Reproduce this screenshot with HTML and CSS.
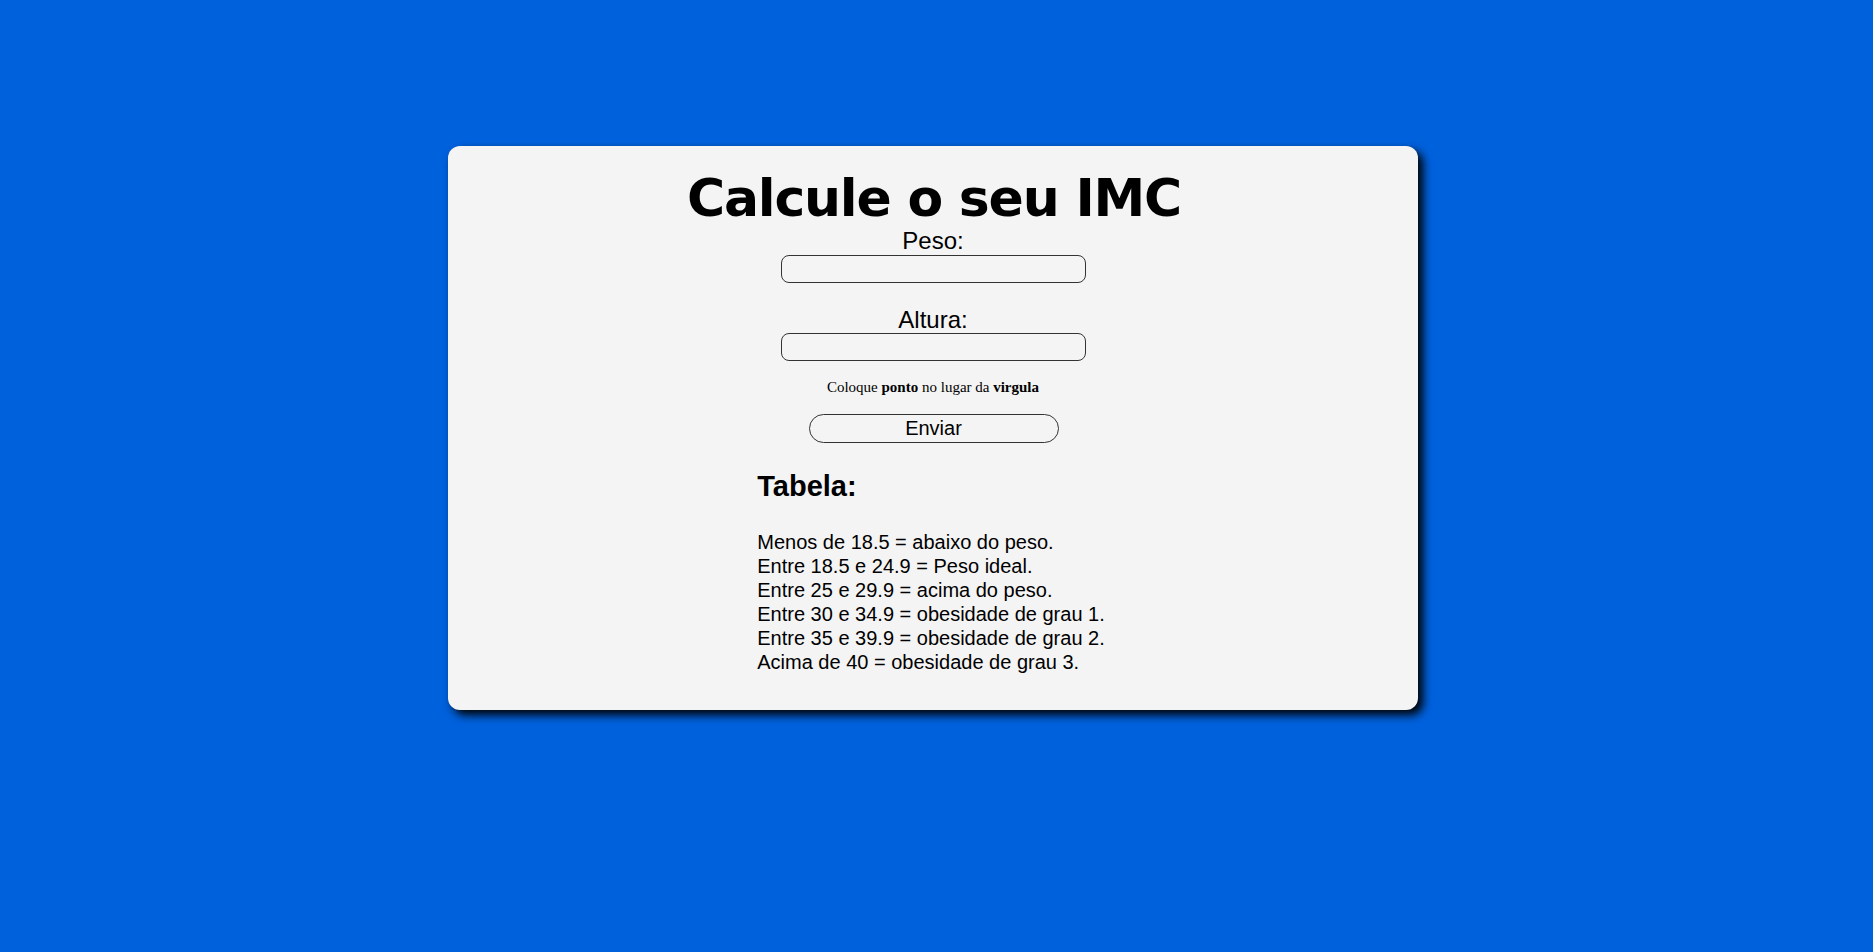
FILE: index.html
```html
<!DOCTYPE html>
<html lang="pt-br">
<head>
<meta charset="utf-8">
<title>Calcule o seu IMC</title>
<link rel="stylesheet" href="styles.css">
</head>
<body>
<main class="card">
  <h1 class="title">Calcule o seu IMC</h1>
  <form class="form">
    <label class="label" for="peso">Peso:</label>
    <input class="field" id="peso" type="text">
    <label class="label label-gap" for="altura">Altura:</label>
    <input class="field" id="altura" type="text">
    <p class="hint">Coloque <b>ponto</b> no lugar da <b>virgula</b></p>
    <button class="send" type="button">Enviar</button>
  </form>
  <section class="table">
    <h2 class="table-title">Tabela:</h2>
    <p class="table-rows">Menos de 18.5 = abaixo do peso.<br>Entre 18.5 e 24.9 = Peso ideal.<br>Entre 25 e 29.9 = acima do peso.<br>Entre 30 e 34.9 = obesidade de grau 1.<br>Entre 35 e 39.9 = obesidade de grau 2.<br>Acima de 40 = obesidade de grau 3.</p>
  </section>
</main>
</body>
</html>
```
FILE: styles.css
```css
html, body {
  margin: 0;
  padding: 0;
}
body {
  background: #0061dd;
  min-height: 952px;
  padding-right: 7px;
  font-family: "Liberation Sans", Arial, sans-serif;
  color: #000;
}
.card {
  box-sizing: border-box;
  width: 970px;
  height: 564px;
  margin: 146px auto 0;
  padding-top: 26px;
  background: #f4f4f4;
  border-radius: 12px;
  box-shadow: 5px 5px 10px #000;
  display: flex;
  flex-direction: column;
  align-items: center;
}
.title {
  margin: 0;
  font-family: "DejaVu Sans", Verdana, sans-serif;
  font-weight: bold;
  font-size: 52px;
  line-height: 53px;
  letter-spacing: -1.2px;
  padding-left: 2px;
}
.form {
  display: flex;
  flex-direction: column;
  align-items: center;
}
.label {
  box-sizing: border-box;
  font-size: 24px;
  line-height: 29px;
  height: 29px;
  padding-top: 1px;
  margin-bottom: 1px;
}
.label-gap {
  margin-top: 21px;
  margin-bottom: 0;
}
.field {
  box-sizing: border-box;
  width: 305px;
  height: 28px;
  margin: 0 0 0 1px;
  border: 1px solid #333;
  border-radius: 8px;
  background: transparent;
  font-family: "Liberation Sans", Arial, sans-serif;
  font-size: 16px;
  outline: none;
}
.hint {
  margin: 18px 0 0;
  font-family: "Liberation Serif", "Times New Roman", serif;
  font-size: 15px;
  line-height: 17px;
}
.send {
  box-sizing: border-box;
  width: 250px;
  height: 29px;
  margin: 18px 0 0 1px;
  border: 1px solid #333;
  border-radius: 15px;
  background: transparent;
  font-family: "Liberation Sans", Arial, sans-serif;
  font-size: 20px;
  line-height: 27px;
  padding: 0;
  color: #000;
}
.table {
  margin-top: 27px;
  padding-right: 4px;
}
.table-title {
  margin: 0;
  font-size: 29px;
  line-height: 33px;
  font-weight: bold;
}
.table-rows {
  margin: 27px 0 0;
  font-size: 20px;
  line-height: 24px;
}
```
